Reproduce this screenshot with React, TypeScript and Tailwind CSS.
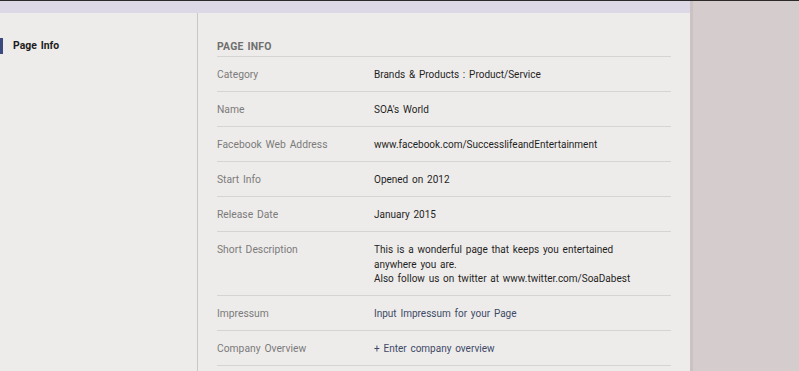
const rows: { label: string; value: string[]; link?: boolean }[] = [
  { label: "Category", value: ["Brands & Products : Product/Service"] },
  { label: "Name", value: ["SOA's World"] },
  { label: "Facebook Web Address", value: ["www.facebook.com/SuccesslifeandEntertainment"] },
  { label: "Start Info", value: ["Opened on 2012"] },
  { label: "Release Date", value: ["January 2015"] },
  {
    label: "Short Description",
    value: [
      "This is a wonderful page that keeps you entertained",
      "anywhere you are.",
      "Also follow us on twitter at www.twitter.com/SoaDabest",
    ],
  },
  { label: "Impressum", value: ["Input Impressum for your Page"], link: true },
  { label: "Company Overview", value: ["+ Enter company overview"], link: true },
];

export default function App() {
  return (
    <div className="h-[371px] w-[799px] overflow-hidden border-t border-[#2b2929] bg-[#d5cccd] font-['Roboto',sans-serif] text-[10px] [word-spacing:1.3px]">
      <div className="flex h-full">
        <div className="flex w-[690px] flex-col bg-[#eeecea]">
          <div className="h-[12px] bg-[#ddd8e6]" />
          <div className="flex flex-1">
            <aside className="w-[198px] border-r border-[#cbc7c6] pt-[25px]">
              <div className="flex h-[16px] items-center border-l-[3px] border-[#3b4a7e] pl-[10px] font-bold text-[#1c1c1c] text-[10.4px]">
                Page Info
              </div>
            </aside>
            <main className="flex-1 px-[19px] pt-[24px]">
              <h2 className="border-b border-[#d6d3d1] pt-[1px] font-bold leading-[18px] tracking-[0.2px] text-[#6f6f6f] text-[10.4px]">
                PAGE INFO
              </h2>
              {rows.map((row) => (
                <div
                  key={row.label}
                  className={`flex border-b border-[#d6d3d1] ${row.value.length > 1 ? "h-[64px] items-start pt-[11px]" : "h-[35px] items-center pt-[2px]"}`}
                >
                  <div className="w-[157px] text-[#7b7b7b] leading-[14.5px] text-[10.3px]">{row.label}</div>
                  <div className={`leading-[14.5px] ${row.link ? "text-[#3c4a68]" : "text-[#1f1f1f]"}`}>
                    {row.value.map((line) => (
                      <div key={line}>{line}</div>
                    ))}
                  </div>
                </div>
              ))}
            </main>
          </div>
        </div>
        <div className="w-[3px] bg-[#cbc2c3]" />
        <div className="flex-1" />
      </div>
    </div>
  );
}
